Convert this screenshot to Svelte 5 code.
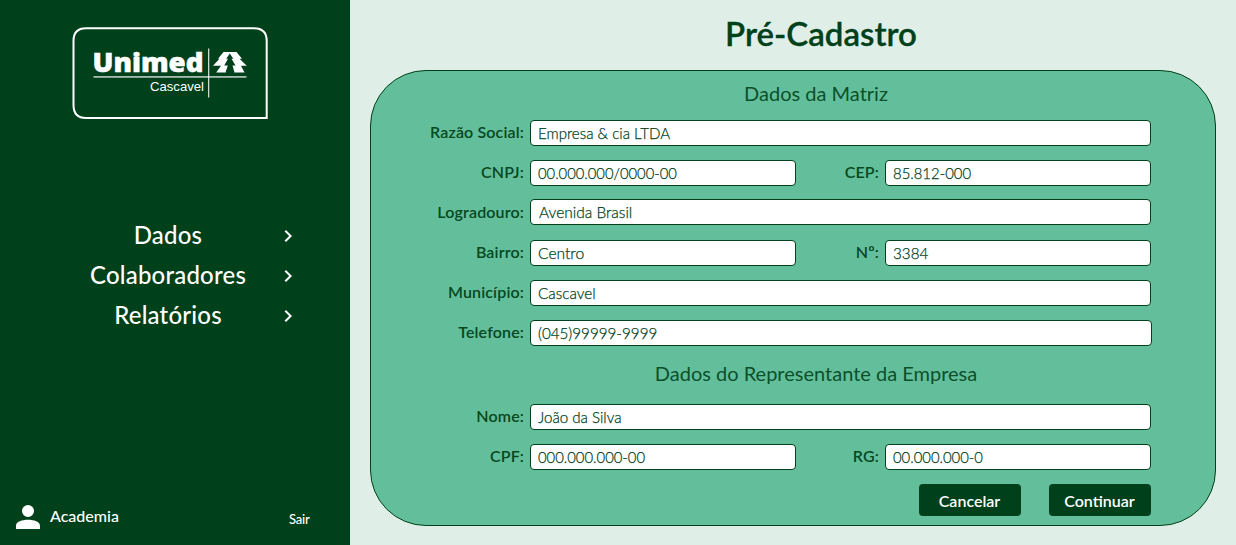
<script>
  const menu = ['Dados', 'Colaboradores', 'Relatórios'];
  const company = [
    [{ label: 'Razão Social:', value: 'Empresa & cia LTDA', stretch: 0.943 }],
    [{ label: 'CNPJ:', value: '00.000.000/0000-00', stretch: 0.924 }, { label: 'CEP:', value: '85.812-000', stretch: 0.93 }],
    [{ label: 'Logradouro:', value: 'Avenida Brasil', kind: 'raised', stretch: 0.968 }],
    [{ label: 'Bairro:', value: 'Centro', stretch: 0.975 }, { label: 'Nº:', value: '3384', stretch: 0.95 }],
    [{ label: 'Município:', value: 'Cascavel', stretch: 0.955 }],
    [{ label: 'Telefone:', value: '(045)99999-9999', kind: 'wide', stretch: 0.95 }]
  ];
  const person = [
    [{ label: 'Nome:', value: 'João da Silva', stretch: 0.945 }],
    [{ label: 'CPF:', value: '000.000.000-00', stretch: 0.927 }, { label: 'RG:', value: '00.000.000-0', stretch: 0.928 }]
  ];
</script>

{#snippet fields(rows)}
  {#each rows as row}
    <div class="row">
      {#each row as field}
        <span class="label">{field.label}</span>
        <div class="input {field.kind ?? ''}" class:full={row.length === 1}>
          <span class="value" style:transform="scaleX({field.stretch})">{field.value}</span>
        </div>
      {/each}
    </div>
  {/each}
{/snippet}

<div class="page">
  <aside>
    <svg class="logo" width="196" height="92" viewBox="0 0 196 92" fill="#fff">
      <path d="M14 1.3H182Q194.7 1.3 194.7 14V91H14Q1.5 91 1.5 78V14Q1.5 1.3 14 1.3Z" fill="none" stroke="#fff" stroke-width="2" />
      <text x="20.5" y="45.3" class="brand" textLength="111" lengthAdjust="spacingAndGlyphs">Unimed</text>
      <rect x="21.5" y="49" width="153" height="1.8" opacity=".65" />
      <rect x="136" y="21.5" width="1.3" height="49" opacity=".8" />
      <text x="78" y="64" class="city" textLength="54" lengthAdjust="spacingAndGlyphs">Cascavel</text>
      <path d="M151.5 25H164.5L170 31.8H167.5L174.8 38.7H169L172.5 45.5H162L158.5 39.5H157.5L154 45.5H144.2L149 38.7H141L147.5 31.8H146Z" />
      <path d="M157.8 26.5L161.3 31.8H159.5L163.5 38.5H160.5L162.5 45.6H153.5L155.8 38.5H152.2L156 31.8H154.2Z" fill="#00401a" />
    </svg>
    <nav>
      {#each menu as item}
        <div class="menu-item">
          <span>{item}</span>
          <svg width="24" height="24" viewBox="0 0 24 24" fill="#fff"><path d="M10 6 8.59 7.41 13.17 12l-4.58 4.59L10 18l6-6z" /></svg>
        </div>
      {/each}
    </nav>
    <footer>
      <svg width="24" height="24" viewBox="0 0 24 24" fill="#fff"><path d="M12 12a6 6 0 1 0 0-12 6 6 0 0 0 0 12zM0 24v-3.4C0 16.8 6 14.7 12 14.7s12 2.1 12 5.9V24z" /></svg>
      <span class="user">Academia</span>
      <span class="exit">Sair</span>
    </footer>
  </aside>
  <main>
    <h1>Pré-Cadastro</h1>
    <section>
      <h2 class="first">Dados da Matriz</h2>
      {@render fields(company)}
      <h2>Dados do Representante da Empresa</h2>
      {@render fields(person)}
      <div class="actions">
        <button>Cancelar</button>
        <button>Continuar</button>
      </div>
    </section>
  </main>
</div>

<style>
  :global(body) { margin: 0; }
  .page { display: flex; width: 1236px; height: 545px; overflow: hidden; font-family: Lato, sans-serif; color: #00401a; background: #dfefe7; }
  aside { width: 350px; box-sizing: border-box; background: #00401a; color: #fff; display: flex; flex-direction: column; padding-top: 27px; }
  .logo { margin-left: 72px; flex: none; }
  .brand { font: 800 26px "Open Sans", sans-serif; stroke: #fff; stroke-width: .5px; }
  .city { font: 13.5px "Liberation Sans", sans-serif; }
  nav { margin-top: 96px; }
  .menu-item { height: 40px; display: flex; align-items: center; font-size: 24px; line-height: 39px; font-weight: 500; letter-spacing: .2px; }
  .menu-item span { width: 156px; margin-left: 90px; height: 40px; display: flex; justify-content: center; white-space: nowrap; }
  .menu-item svg { margin-left: 30px; margin-top: 1px; }
  footer { margin-top: auto; height: 57px; display: flex; align-items: center; padding-left: 15px; box-sizing: border-box; }
  footer svg { margin-left: 1px; }
  .user { margin: -2px 0 0 10px; width: 239px; font-size: 16px; font-weight: 500; }
  .exit { font-size: 13px; margin: 5px 0 0 0; font-weight: 500; letter-spacing: -.2px; }
  main { width: 886px; box-sizing: border-box; padding: 0 20px; }
  h1 { height: 70px; margin: 0 0 0 56px; text-align: center; font-size: 33px; line-height: 67px; font-weight: 600; -webkit-text-stroke: .3px #00401a; }
  section { height: 456px; box-sizing: border-box; border: 1px solid #00401a; border-radius: 56px; background: #63bf9b; padding-left: 50px; }
  h2 { margin: 0; width: 790px; height: 44px; line-height: 40px; font-size: 20px; font-weight: 400; text-align: center; color: #0b502b; }
  h2.first { height: 42px; line-height: 44px; }
  .row { display: flex; height: 40px; align-items: center; }
  .label { width: 103px; height: 40px; line-height: 38px; display: flex; justify-content: flex-end; font-size: 16px; font-weight: 600; white-space: nowrap; letter-spacing: .15px; color: #054821; }
  .label:not(:first-child) { width: 83px; }
  .input { width: 266px; height: 26px; box-sizing: border-box; margin-left: 6px; border: 1px solid #00401a; border-radius: 4px; background: #fff; padding-left: 7px; font-size: 16px; font-weight: 300; line-height: 24px; white-space: nowrap; -webkit-text-stroke: .25px #00401a; }
  .value { display: inline-block; transform-origin: left; }
  .full { width: 621px; }
  .wide { width: 622px; }
  .raised { margin-bottom: 2px; padding-left: 8px; }
  .actions { display: flex; gap: 28px; justify-content: flex-end; margin: 7px 64px 0 0; }
  button { width: 102px; height: 32px; border: 0; border-radius: 4px; background: #00401a; color: #fff; font: 600 16px/32px Lato, sans-serif; padding: 1px 1px 0 0; }
</style>
